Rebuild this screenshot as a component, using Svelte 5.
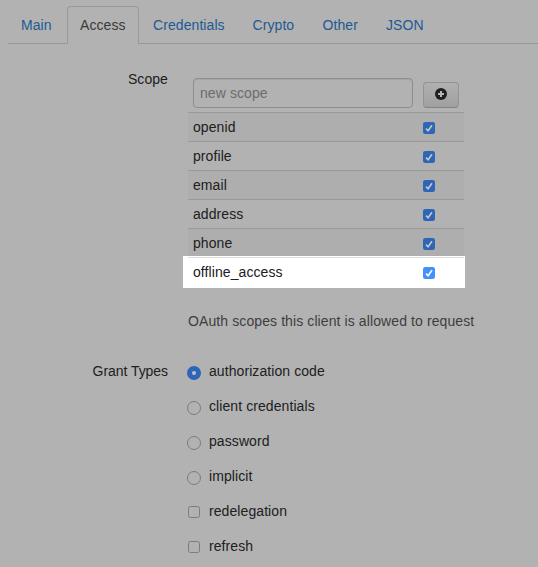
<script>
  const tabs = [
    { name: 'Main', width: 59 },
    { name: 'Access', width: 72 },
    { name: 'Credentials', width: 99.5 },
    { name: 'Crypto', width: 70 },
    { name: 'Other', width: 63.5 },
    { name: 'JSON', width: 70 }
  ];
  const scopes = ['openid', 'profile', 'email', 'address', 'phone', 'offline_access'];
  const grants = [
    { name: 'authorization code', type: 'radio', on: true },
    { name: 'client credentials', type: 'radio' },
    { name: 'password', type: 'radio' },
    { name: 'implicit', type: 'radio' },
    { name: 'redelegation', type: 'box' },
    { name: 'refresh', type: 'box' }
  ];
</script>

<div class="page">
  <nav>
    {#each tabs as tab}
      <a class="tab" class:active={tab.name === 'Access'} style="width: {tab.width}px">{tab.name}</a>
    {/each}
  </nav>

  <div class="group scope">
    <div class="label">Scope</div>
    <div class="controls">
      <div class="entry">
        <div class="input">new scope</div>
        <button aria-label="Add">
          <svg width="12" height="12" viewBox="0 0 12 12">
            <circle cx="6" cy="6" r="6" fill="#202020" />
            <path d="M5 3h2v2h2v2H7v2H5V7H3V5h2z" fill="#b5b5b5" />
          </svg>
        </button>
      </div>
      {#each scopes as scope, i}
        <div class="row" class:odd={i % 2 === 0} class:lit={i === 5}>
          <span>{scope}</span>
          <svg class="check" width="12" height="12" viewBox="0 0 12 12">
            <rect width="12" height="12" rx="2.3" fill={i === 5 ? '#4190fb' : '#2e65b4'} />
            <path d="M3 6.6 5.1 8.8 9 3.2" fill="none" stroke={i === 5 ? '#fff' : '#c4c8d0'} stroke-width="1.6" />
          </svg>
        </div>
      {/each}
      <div class="help">OAuth scopes this client is allowed to request</div>
    </div>
  </div>

  <div class="group grants">
    <div class="label tight">Grant Types</div>
    <div class="controls">
      {#each grants as grant}
        <div class="grant">
          <span class="mark {grant.type}" class:on={grant.on}></span>
          <span>{grant.name}</span>
        </div>
      {/each}
    </div>
  </div>
</div>

<style>
  :global(body) { background: #b2b2b2; }
  .page {
    width: 538px; height: 567px; overflow: hidden; box-sizing: border-box;
    padding-top: 6px; background: #b2b2b2; color: #202020;
    font: 14px/20px "Liberation Sans", Arial, sans-serif;
    letter-spacing: 0.08px;
  }
  nav { display: flex; height: 38px; margin-left: 8px; box-sizing: border-box; border-bottom: 1px solid #999; }
  .tab { box-sizing: border-box; flex: none; height: 38px; padding: 9px 0 0 13px; color: #1d5a92; white-space: nowrap; }
  .tab.active {
    margin-right: 1px; padding-left: 12px; color: #3a3a3a; background: #b2b2b2;
    border: 1px solid #999; border-bottom: 0; border-radius: 4px 4px 0 0; padding-top: 8px;
  }
  .group { display: flex; }
  .label { width: 168px; text-align: right; margin-right: 20px; flex: none; white-space: nowrap; }
  .tight { letter-spacing: -0.05px; }
  .scope { margin-top: 25px; }
  .controls { width: 276px; }
  .entry { display: flex; height: 43px; box-sizing: border-box; padding: 9px 0 0 5px; }
  .input {
    width: 220px; height: 30px; box-sizing: border-box; border: 1px solid #8e8e8e; border-radius: 4px;
    padding: 4px 6px; color: #6c6c6c; box-shadow: inset 0 1px 1px rgba(0, 0, 0, 0.07);
  }
  button {
    width: 36px; height: 26px; margin: 4px 0 0 10px; padding: 0 0 2px;
    display: flex; align-items: center; justify-content: center;
    border: 1px solid #939393; border-bottom-color: #838383; border-radius: 4px;
    background: linear-gradient(#b0b0b0, #a0a0a0);
  }
  .row {
    display: flex; justify-content: space-between; height: 29px; box-sizing: border-box;
    border-top: 1px solid #999; padding: 4px 29px 0 5px;
  }
  .row.odd { background: #aeaeae; }
  .check { margin-top: 5px; }
  .row.lit {
    height: 31px; background: #fff; border-color: #ddd;
    box-shadow: 0 -1px #fff, -5px 0 #fff, 1px 0 #fff, -5px -1px #fff, 1px -1px #fff;
  }
  .help { margin-top: 23px; color: #3e3e3e; white-space: nowrap; letter-spacing: 0.1px; }
  .grants { margin-top: 30px; }
  .grant { display: flex; height: 35px; }
  .mark { box-sizing: border-box; border: 1px solid #7c7c7c; flex: none; }
  .radio { width: 14px; height: 14px; border-radius: 50%; margin: 5px 8px 0 -1px; }
  .radio.on { border: 5px solid #2e65b4; background: #bfc3cb; }
  .box { width: 12px; height: 12px; border-radius: 2.5px; margin: 5px 9px 0 0; }
</style>
